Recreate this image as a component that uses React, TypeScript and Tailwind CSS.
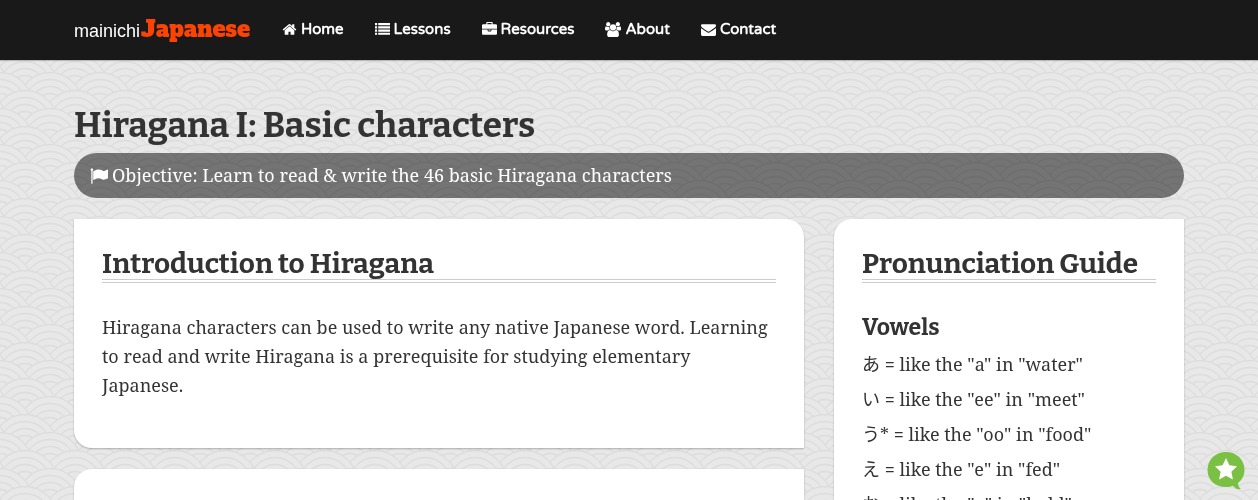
import type { ReactNode } from "react";

const ICONS = {
  home: {
    viewBox: "0 0 1792 1792",
    path: "M1472 992v480q0 26-19 45t-45 19h-384v-384h-256v384h-384q-26 0-45-19t-19-45v-480q0-1 .5-3t.5-3l575-474 575 474q1 2 1 6zm223-69l-62 74q-8 9-21 11h-3q-13 0-21-7l-692-577-692 577q-12 8-24 7-13-2-21-11l-62-74q-8-10-7-23.5t11-21.5l719-599q32-26 76-26t76 26l244 204v-195q0-14 9-23t23-9h192q14 0 23 9t9 23v408l219 182q10 8 11 21.5t-7 23.5z",
  },
  list: {
    viewBox: "0 0 1792 1792",
    path: "M0 1280h256v256H0zM0 896h256v256H0zM0 512h256v256H0zM0 128h256v256H0zM384 1280h1408v256H384zM384 896h1408v256H384zM384 512h1408v256H384zM384 128h1408v256H384z",
  },
  briefcase: {
    viewBox: "0 0 1792 1792",
    path: "M640 256h512v-128h-512v128zm1152 640v480q0 66-47 113t-113 47h-1472q-66 0-113-47t-47-113v-480h672v160q0 26 19 45t45 19h320q26 0 45-19t19-45v-160h672zm-768 0v128h-256v-128h256zm768-480v384h-1792v-384q0-66 47-113t113-47h352v-160q0-40 28-68t68-28h576q40 0 68 28t28 68v160h352q66 0 113 47t47 113z",
  },
  users: {
    viewBox: "0 0 1920 1792",
    path: "M593 896q-162 5-265 128h-134q-82 0-138-40.5t-56-118.5q0-353 124-353 6 0 43.5 21t97.5 42.5 119 21.5q67 0 133-23-5 37-5 66 0 139 81 256zm1071 637q0 120-73 189.5t-194 69.5h-874q-121 0-194-69.500t-73-189.500q0-53 3.500-103.500t14-109 26.500-108.500 43-97.500 62-81 85.500-53.500 111.500-20q10 0 43 21.500t73 48 107 48 135 21.500 135-21.500 107-48 73-48 43-21.500q61 0 111.500 20t85.500 53.500 62 81 43 97.500 26.500 108.500 14 109 3.500 103.500zm-1024-1277q0 106-75 181t-181 75-181-75-75-181 75-181 181-75 181 75 75 181zm704 384q0 159-112.500 271.500t-271.500 112.500-271.500-112.500-112.500-271.500 112.500-271.500 271.500-112.500 271.500 112.500 112.500 271.500zm576 225q0 78-56 118.500t-138 40.500h-134q-103-123-265-128 81-117 81-256 0-29-5-66 66 23 133 23 59 0 119-21.500t97.500-42.500 43.500-21q124 0 124 353zm-128-609q0 106-75 181t-181 75-181-75-75-181 75-181 181-75 181 75 75 181z",
  },
  envelope: {
    viewBox: "0 0 1792 1792",
    path: "M1792 710v794q0 66-47 113t-113 47h-1472q-66 0-113-47t-47-113v-794q44 49 101 87 362 246 497 345 57 42 92.500 65.500t94.500 48 110 24.500h2q51 0 110-24.500t94.500-48 92.500-65.500q170-123 498-345 57-39 100-87zm0-294q0 79-49 151t-122 123q-376 261-468 325-10 7-42.500 30.500t-54 38-52 32.500-57.500 27-50 9h-2q-23 0-50-9t-57.500-27-52-32.500-54-38-42.500-30.500q-91-64-262-182.500t-205-142.500q-62-42-117-115.500t-55-136.500q0-78 41.500-130t118.500-52h1472q65 0 112.500 47t47.500 113z",
  },
  flag: {
    viewBox: "0 0 1792 1792",
    path: "M320 256q0 72-64 110v1266q0 13-9.500 22.500t-22.500 9.500h-64q-13 0-22.500-9.500t-9.500-22.500v-1266q-64-38-64-110 0-53 37.500-90.500t90.500-37.500 90.500 37.500 37.500 90.500zm1472 64v763q0 25-12.500 38.500t-39.500 27.500q-215 116-369 116-61 0-123.500-22t-108.500-48-115.500-48-142.500-22q-192 0-464 146-17 9-33 9-26 0-45-19t-19-45v-742q0-32 31-55 21-14 79-43 236-120 421-120 107 0 200 29t219 88q38 19 88 19 54 0 117.500-21t110-47 88-47 54.500-21q26 0 45 19t19 45z",
  },
};

type IconName = keyof typeof ICONS;

function Icon({ name, className }: { name: IconName; className: string }) {
  const { viewBox, path } = ICONS[name];
  return (
    <svg viewBox={viewBox} className={className} fill="currentColor" aria-hidden="true">
      <path d={path} />
    </svg>
  );
}

const NAV: { label: string; icon: IconName }[] = [
  { label: "Home", icon: "home" },
  { label: "Lessons", icon: "list" },
  { label: "Resources", icon: "briefcase" },
  { label: "About", icon: "users" },
  { label: "Contact", icon: "envelope" },
];

const VOWELS = [
  { kana: "あ", sound: "a", word: "water" },
  { kana: "い", sound: "ee", word: "meet" },
  { kana: "う*", sound: "oo", word: "food" },
  { kana: "え", sound: "e", word: "fed" },
  { kana: "お", sound: "o", word: "hold" },
];

const WAVE_ROWS = [-54, -36, -18, 0, 18];
const WAVE_RINGS = [
  { drop: 0, r: 32 },
  { drop: 7, r: 26 },
  { drop: 14, r: 20 },
  { drop: 21, r: 14 },
];

// Seigaiha wave pattern: each row of scales covers the one above it.
function Waves() {
  return (
    <svg className="fixed inset-0 -z-10 h-full w-full" aria-hidden="true">
      <defs>
        <pattern id="waves" width="50" height="36" patternUnits="userSpaceOnUse">
          <rect width="50" height="36" fill="#e8e8e8" />
          {WAVE_ROWS.map((top, row) =>
            [125, 75, 25, -25, -75].map((x) =>
              WAVE_RINGS.map(({ drop, r }) => (
                <circle
                  key={`${top}-${x}-${r}`}
                  cx={row % 2 === 0 ? x : x + 25}
                  cy={top + drop + r + 0.5}
                  r={r}
                  fill="#e8e8e8"
                  stroke="#dddddd"
                  strokeWidth="1.3"
                />
              ))
            )
          )}
        </pattern>
      </defs>
      <rect width="100%" height="100%" fill="url(#waves)" />
    </svg>
  );
}

function CardTitle({ children }: { children: ReactNode }) {
  return (
    <h2 className="border-b-4 border-double border-[#cccccc] font-['Bitter','Noto_Serif',serif] text-[28px] leading-[30px] font-bold whitespace-nowrap">
      {children}
    </h2>
  );
}

export default function App() {
  return (
    <div className="relative isolate font-['Noto_Serif','DejaVu_Serif_Condensed','Noto_Sans_CJK_JP',serif] text-[18px] text-[#333333]">
      <Waves />
      <header className="bg-[#191919] shadow-[0_1px_1px_rgba(0,0,0,0.2)]">
        <div className="mx-auto flex h-[60px] w-full max-w-[1110px] items-center gap-8 pb-[2px]">
          <a href="#" className="flex items-baseline gap-px text-white">
            <span className="font-['Liberation_Sans',sans-serif] text-[18px]">mainichi</span>
            <span className="font-['Alfa_Slab_One','DejaVu_Serif',serif] text-[22px] text-[#fb4403]">Japanese</span>
          </a>
          <nav className="flex items-center gap-[31px] font-['Varela_Round','Noto_Sans',sans-serif] text-[15px] font-bold text-white">
            {NAV.map((item) => (
              <a key={item.label} href="#" className="flex items-center gap-1">
                <Icon name={item.icon} className="h-[15px]" />
                {item.label}
              </a>
            ))}
          </nav>
        </div>
      </header>

      <main className="mx-auto w-full max-w-[1110px] pt-[42px]">
        <h1 className="font-['Bitter','Noto_Serif',serif] text-[35px] leading-[46px] font-bold">
          Hiragana I: Basic characters
        </h1>
        <p className="mt-[5px] flex h-[45px] items-center gap-1 rounded-full bg-black/50 px-4 text-white">
          <Icon name="flag" className="h-[18px]" />
          Objective: Learn to read &amp; write the 46 basic Hiragana characters
        </p>

        <div className="mt-[21px] flex items-start gap-[30px]">
          <div className="flex grow flex-col gap-[21px]">
            <section className="rounded-tr-[18px] rounded-bl-[18px] bg-white px-7 pt-[30px] pb-12 shadow-[0_1px_2px_rgba(0,0,0,0.25)]">
              <CardTitle>Introduction to Hiragana</CardTitle>
              <p className="mt-[30px] leading-[29px]">
                Hiragana characters can be used to write any native Japanese word. Learning to read and write Hiragana
                is a prerequisite for studying elementary Japanese.
              </p>
            </section>
            <section className="min-h-16 rounded-tl-[18px] bg-white shadow-[0_1px_2px_rgba(0,0,0,0.25)]" />
          </div>

          <aside className="w-[350px] shrink-0 rounded-tl-[18px] bg-white px-7 pt-[30px] shadow-[0_1px_2px_rgba(0,0,0,0.25)]">
            <CardTitle>Pronunciation Guide</CardTitle>
            <h3 className="mt-7 font-['Bitter','Noto_Serif',serif] text-[23px] leading-8 font-bold">Vowels</h3>
            <ul className="mt-1 leading-[35px]">
              {VOWELS.map((v) => (
                <li key={v.kana}>
                  {v.kana} = like the "{v.sound}" in "{v.word}"
                </li>
              ))}
            </ul>
          </aside>
        </div>
      </main>

      <button type="button" aria-label="Feedback" className="fixed right-[13px] bottom-[10px] h-[39px] w-[38px]">
        <svg viewBox="0 0 38 39" className="h-full w-full">
          <path d="M19 1C8.500 1 0.500 8.500 0.500 19S8.500 36 19 36c2.500 0 5-.5 7-1.300 1.500 2.300 4.500 4 8 3.300-2-1.200-3-3.500-3-6 4-3.200 6.500-7.500 6.500-13C37.500 8.500 29.500 1 19 1z" fill="#7ac143" />
          <path d="M19 7l3.400 7.300 7.600 1-5.600 5.400 1.500 7.800L19 24.700l-6.900 3.800 1.500-7.800L8 15.300l7.600-1z" fill="#fff" />
        </svg>
      </button>
    </div>
  );
}
